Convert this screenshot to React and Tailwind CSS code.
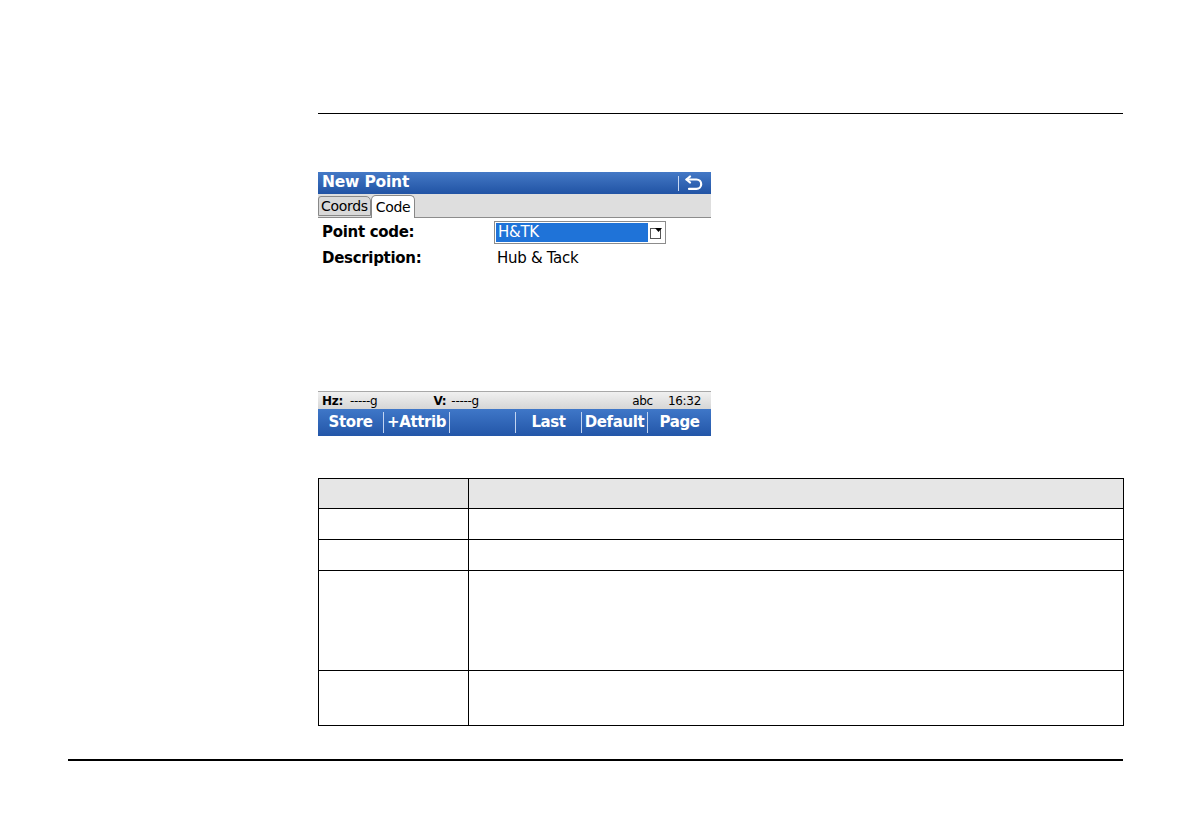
const screenFont = { fontFamily: '"DejaVu Sans", Verdana, sans-serif' };

const UndoIcon = () => (
  <svg width="22" height="16" viewBox="0 0 22 16" fill="none" stroke="white" strokeWidth="2.2" strokeLinecap="round" strokeLinejoin="round">
    <path d="M6 1.5 2.5 4.5 6 7.5" />
    <path d="M2.5 4.5h10a4.7 4.7 0 0 1 0 9.4H5" />
  </svg>
);

const DropIcon = () => (
  <svg width="12" height="12" viewBox="0 0 12 12">
    <rect x="0.5" y="1.5" width="10" height="10" fill="white" stroke="#555" strokeWidth="1" />
    <path d="M5 1h7l-3.5 4z" fill="black" />
  </svg>
);

const SoftKey = ({ label, width, last }) => (
  <div className="flex h-full items-center" style={{ width }}>
    <div className="flex-1 flex justify-center">
      <span className="text-[15px] font-bold text-white leading-none tracking-[-0.4px]">{label}</span>
    </div>
    {!last && <div className="w-px h-[21px] bg-[#c2d4f1]" />}
  </div>
);

const rows = [
  { h: 'h-[31px]' },
  { h: 'h-[31px]' },
  { h: 'h-[100px]' },
  { h: 'h-[54px]' },
];

export default function App() {
  return (
    <div className="w-[1190px] h-[840px] bg-white flex flex-col">
      <div className="ml-[318px] mt-[113px] w-[805px] h-px bg-black" />

      {/* device screen, upper part */}
      <div className="ml-[318px] mt-[58px] w-[393px]" style={screenFont}>
        <div className="h-[22px] bg-gradient-to-b from-[#4479c6] to-[#2153a4] flex items-center pl-[4px]">
          <span className="text-[15.5px] font-bold text-white leading-none tracking-[-0.2px]">New Point</span>
          <div className="ml-auto flex items-center h-full">
            <div className="w-px h-[15px] bg-[#c9d9f3]" />
            <div className="w-[32px] flex justify-center">
              <UndoIcon />
            </div>
          </div>
        </div>
        <div className="h-[24px] bg-[#dedede] border-b border-[#8c8c8c] flex items-end">
          <div className="h-[20px] mb-[1px] px-[2px] bg-[#d9d9d9] border border-[#888] rounded-tr-[5px] rounded-tl-[3px] flex items-center">
            <span className="text-[14px] text-black leading-none tracking-[-0.3px]">Coords</span>
          </div>
          <div className="h-[23px] -mb-px px-[4px] bg-white border border-b-0 border-[#888] rounded-t-[5px] flex items-center">
            <span className="text-[14px] text-black leading-none tracking-[-0.3px]">Code</span>
          </div>
        </div>
        <div className="flex items-center h-[23px] mt-[3px]">
          <span className="w-[176px] pl-[4px] text-[15px] font-bold text-black leading-none tracking-[-0.3px]">Point code:</span>
          <div className="w-[172px] h-[23px] border border-[#8c8c8c] bg-white flex items-center p-px">
            <div className="flex-1 h-full bg-[#1f73d8] flex items-center pl-[2px]">
              <span className="text-[15px] text-white leading-none tracking-[-0.3px]">H&amp;TK</span>
            </div>
            <div className="w-[16px] flex justify-center">
              <DropIcon />
            </div>
          </div>
        </div>
        <div className="flex items-center h-[24px] mt-[2px]">
          <span className="w-[179px] pl-[4px] text-[15px] font-bold text-black leading-none tracking-[-0.3px]">Description:</span>
          <span className="text-[15px] text-black leading-none tracking-[-0.3px]">Hub &amp; Tack</span>
        </div>
      </div>

      {/* device screen, lower part */}
      <div className="ml-[318px] mt-[121px] w-[393px]" style={screenFont}>
        <div className="h-[18px] bg-gradient-to-b from-[#f0f0f0] to-[#d6d6d6] border-t border-[#a8a8a8] flex items-center text-[12px] text-black leading-none tracking-[-0.3px]">
          <span className="pl-[4px] font-bold">Hz</span>
          <span className="font-bold">:</span>
          <span className="ml-[7px]">-----g</span>
          <span className="ml-[56px] font-bold">V:</span>
          <span className="ml-[5px]">-----g</span>
          <span className="ml-auto">abc</span>
          <span className="ml-[15px] mr-[10px]">16:32</span>
        </div>
        <div className="h-[27px] bg-gradient-to-b from-[#3f77c8] to-[#2356a8] flex items-center">
          <SoftKey label="Store" width={66} />
          <SoftKey label="+Attrib" width={66} />
          <SoftKey label="" width={66} />
          <SoftKey label="Last" width={66} />
          <SoftKey label="Default" width={66} />
          <SoftKey label="Page" width={63} last />
        </div>
      </div>

      {/* table */}
      <div className="ml-[318px] mt-[42px] w-[806px] border-[1.5px] border-black">
        <div className="h-[30px] bg-[#e6e6e6] flex border-b-[1.5px] border-black">
          <div className="w-[150px] border-r-[1.5px] border-black" />
          <div className="flex-1" />
        </div>
        {rows.map((r, i) => (
          <div key={i} className={`${r.h} flex ${i < rows.length - 1 ? 'border-b-[1.5px] border-black' : ''}`}>
            <div className="w-[150px] border-r-[1.5px] border-black" />
            <div className="flex-1" />
          </div>
        ))}
      </div>

      <div className="ml-[68px] mt-[33px] w-[1055px] h-[1.5px] bg-black" />
    </div>
  );
}
